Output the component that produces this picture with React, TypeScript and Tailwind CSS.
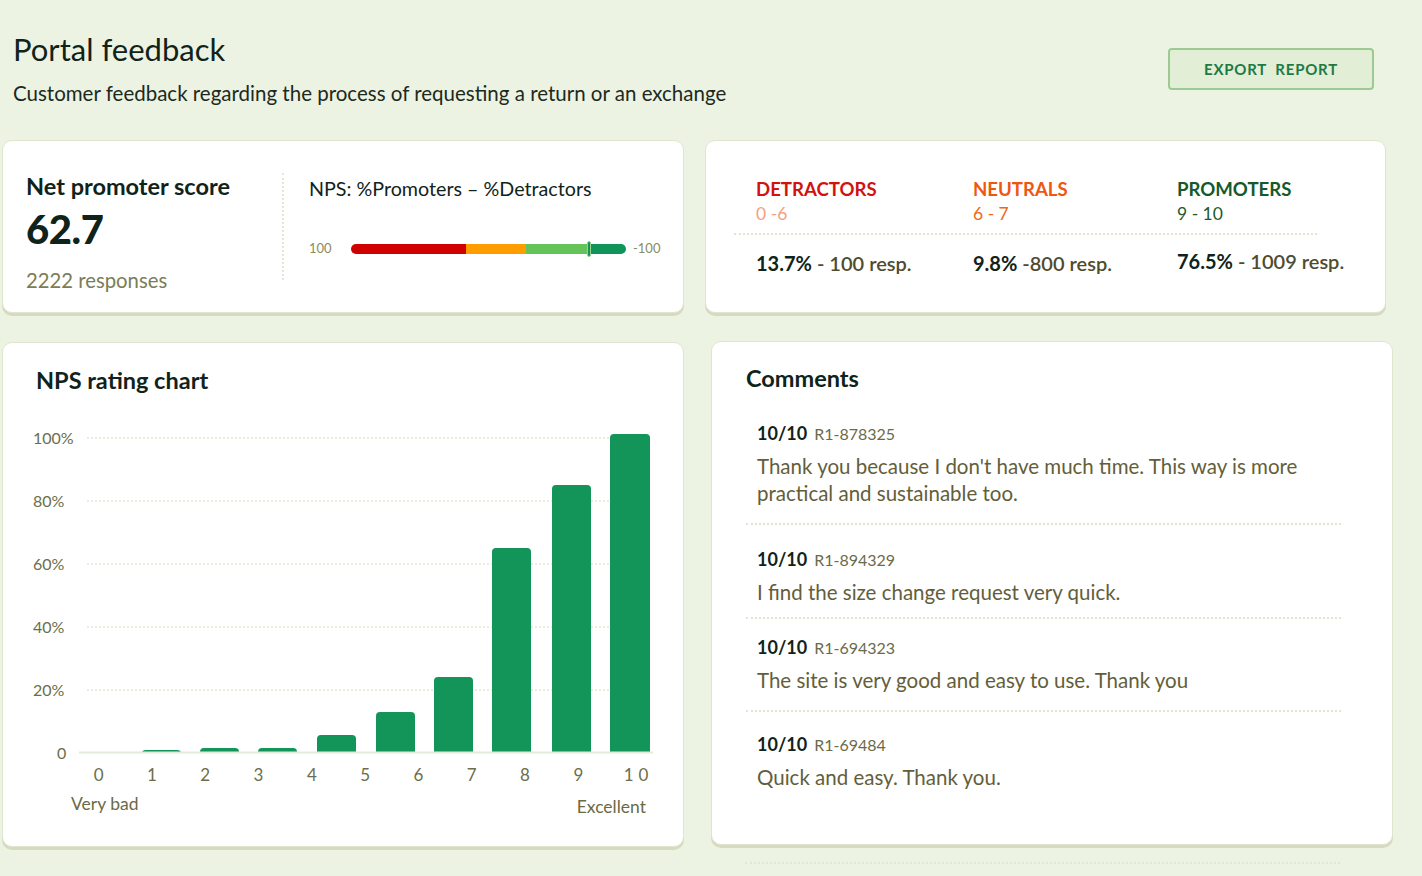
import React from "react";

const bars = [
  { x: 63, top: 320 },
  { x: 121, top: 318 },
  { x: 179, top: 318 },
  { x: 238, top: 305 },
  { x: 297, top: 282 },
  { x: 355, top: 247 },
  { x: 413, top: 118 },
  { x: 473, top: 55 },
  { x: 531, top: 4 },
];

const comments = [
  {
    id: "R1-878325",
    text: "Thank you because I don't have much time. This way is more practical and sustainable too.",
    pt: "pt-0",
    pb: "pb-[16px]",
  },
  { id: "R1-894329", text: "I find the size change request very quick.", pt: "pt-[22px]", pb: "pb-[11px]" },
  { id: "R1-694323", text: "The site is very good and easy to use. Thank you", pt: "pt-[16px]", pb: "pb-[16px]" },
  { id: "R1-69484", text: "Quick and easy. Thank you.", pt: "pt-[20px]", pb: "" },
];

const card =
  "rounded-[10px] border border-[#dfe5cf] bg-white shadow-[0_3px_0_#d6dabf]";

export default function App() {
  return (
    <div className="h-[876px] overflow-hidden bg-[#edf3e3] font-['Lato',sans-serif] text-[#10231a]">
      {/* Header */}
      <div className="flex items-start justify-between pl-[13px] pr-[48px] pt-[33px]">
        <div>
          <h1 className="text-[31px] leading-[32px] font-normal">Portal feedback</h1>
          <p className="mt-[16px] text-[20.5px] leading-[24px] text-[#1c2a1e]">
            Customer feedback regarding the process of requesting a return or an exchange
          </p>
        </div>
        <button className="mt-[15px] flex h-[42px] w-[206px] items-center justify-center rounded-[4px] border-2 border-[#9bcb92] bg-[#e3eed6] text-[15px] font-bold tracking-[0.05em] text-[#1e7a45]">
          EXPORT&nbsp; REPORT
        </button>
      </div>

      {/* Top row */}
      <div className="mt-[35px] flex gap-[21px] pl-[2px]">
        <div className={`${card} flex h-[173px] w-[682px]`}>
          <div className="w-[279px] shrink-0 pl-[23px] pt-[33px]">
            <div className="text-[23.5px] leading-[24px] font-bold">Net promoter score</div>
            <div className="mt-[9px] text-[40px] leading-[44px] font-black tracking-[-0.01em]">
              62.7
            </div>
            <div className="mt-[17px] text-[20.3px] leading-[24px] text-[#7a7d55]">
              2222 responses
            </div>
          </div>
          <div className="my-[32px] border-l-2 border-dotted border-[#e4e7d2]" />
          <div className="pl-[25px] pt-[36px]">
            <div className="text-[19.7px] leading-[24px]">NPS: %Promoters – %Detractors</div>
            <div className="mt-[38px] flex items-center">
              <span className="w-[42px] text-[13px] text-[#8a8c62]">100</span>
              <div className="relative flex h-[10px] w-[275px]">
                <div className="h-full w-[115px] rounded-l-full bg-[#d10000]" />
                <div className="h-full w-[60px] bg-[#ff9d00]" />
                <div className="h-full w-[62px] bg-[#64c45a]" />
                <div className="h-full flex-1 rounded-r-full bg-[#11945a]" />
                <div className="absolute left-[236px] top-[-3px] h-[16px] w-[4px] rounded-sm border border-[#9ad48e] bg-[#11945a]" />
              </div>
              <span className="ml-[7px] text-[13px] text-[#8a8c62]">-100</span>
            </div>
          </div>
        </div>

        <div className={`${card} h-[173px] w-[681px] pl-[28px] pt-[37px]`}>
          <div className="w-[583px]">
            <div className="flex pl-[22px]">
              <div className="w-[217px] shrink-0">
                <div className="text-[18.6px] leading-[22px] font-bold text-[#d3120e]">DETRACTORS</div>
                <div className="mt-[3px] text-[17.5px] leading-[22px] text-[#f4a27f]">0 -6</div>
              </div>
              <div className="w-[204px] shrink-0">
                <div className="text-[18.6px] leading-[22px] font-bold text-[#ee5710]">NEUTRALS</div>
                <div className="mt-[3px] text-[17.5px] leading-[22px] text-[#ee6a14]">6 - 7</div>
              </div>
              <div>
                <div className="text-[18.6px] leading-[22px] font-bold text-[#145a2b]">PROMOTERS</div>
                <div className="mt-[3px] text-[17.5px] leading-[22px] text-[#1e5a2e]">9 - 10</div>
              </div>
            </div>
            <div className="mt-[8px] border-t-2 border-dotted border-[#e3e6cf]" />
            <div className="mt-[16px] flex whitespace-nowrap pl-[22px] text-[20px] leading-[24px] text-[#4f4b2e]">
              <div className="w-[217px] shrink-0">
                <span className="font-bold text-[#10231a]">13.7%</span>
                <span className="font-semibold"> - 100 resp.</span>
              </div>
              <div className="w-[204px] shrink-0">
                <span className="font-bold text-[#10231a]">9.8%</span>
                <span className="font-semibold"> -800 resp.</span>
              </div>
              <div className="-mt-[2px]">
                <span className="font-bold text-[#10231a]">76.5%</span>
                <span className="font-semibold"> - 1009 resp.</span>
              </div>
            </div>
          </div>
        </div>
      </div>

      {/* Bottom row */}
      <div className="mt-[29px] flex items-start gap-[27px] pl-[2px]">
        <div className={`${card} h-[505px] w-[682px] pt-[25px]`}>
          <div className="pl-[33px] text-[23.5px] leading-[24px] font-bold">NPS rating chart</div>

          <div className="mt-[38px] flex">
            <div className="flex w-[76px] flex-col gap-[47px] pl-[30px] text-[16px] leading-[16px] text-[#6c6e4a]">
              <span>100%</span>
              <span>80%</span>
              <span>60%</span>
              <span>40%</span>
              <span>20%</span>
              <span className="pl-[24px]">0</span>
            </div>
            <svg width="574" height="326" viewBox="0 0 574 326" className="block">
              {[8, 71, 134, 197, 260].map((y) => (
                <line
                  key={y}
                  x1="8"
                  x2="572"
                  y1={y}
                  y2={y}
                  stroke="#e4e8d4"
                  strokeWidth="1.5"
                  strokeDasharray="2 2"
                />
              ))}
              {bars.map((b, i) => (
                <rect
                  key={i}
                  x={b.x}
                  y={b.top}
                  width={i === bars.length - 1 ? 40 : 39}
                  height={322 - b.top + 4}
                  rx="4"
                  fill="#13955a"
                />
              ))}
              <rect x="0" y="322" width="574" height="4" fill="#ffffff" />
              <line x1="0" x2="574" y1="322.5" y2="322.5" stroke="#e4edd9" strokeWidth="2" />
            </svg>
          </div>

          <div className="mt-[4px] flex pl-[69px] text-[17px] leading-[20px] text-[#6c6e4a]">
            {["0", "1", "2", "3", "4", "5", "6", "7", "8", "9"].map((n) => (
              <span key={n} className="w-[53.3px] text-center">
                {n}
              </span>
            ))}
            <span className="ml-[7px] w-[53.3px] text-center tracking-[0.3em]">10</span>
          </div>

          <div className="mt-[9px] flex justify-between pl-[68px] pr-[37px] text-[17.5px] leading-[20px] text-[#6c6a45]">
            <span>Very bad</span>
            <span className="mt-[3px]">Excellent</span>
          </div>
        </div>

        <div className="-mt-[1px]">
          <div className={`${card} h-[504px] w-[682px] pt-[24px]`}>
            <div className="pl-[34px] text-[23.5px] leading-[24px] font-bold">Comments</div>
            <div className="ml-[34px] mt-[31px] w-[595px]">
              {comments.map((c, i) => (
                <div
                  key={c.id}
                  className={`pl-[11px] ${c.pt} ${c.pb} ${
                    i < comments.length - 1 ? "border-b-2 border-dotted border-[#e3e6cf]" : ""
                  }`}
                >
                  <div className="flex h-[24px] items-baseline gap-[7px] leading-[24px]">
                    <span className="text-[18px] font-bold text-[#10231a]">10/10</span>
                    <span className="text-[16px] text-[#6b6b4a]">{c.id}</span>
                  </div>
                  <p className="mt-[8px] w-[570px] text-[20.5px] leading-[27px] text-[#635e3a]">
                    {c.text}
                  </p>
                </div>
              ))}
            </div>
          </div>
          <div className="ml-[34px] mt-[17px] w-[595px] border-t-2 border-dotted border-[#e3e6cf]" />
        </div>
      </div>
    </div>
  );
}
